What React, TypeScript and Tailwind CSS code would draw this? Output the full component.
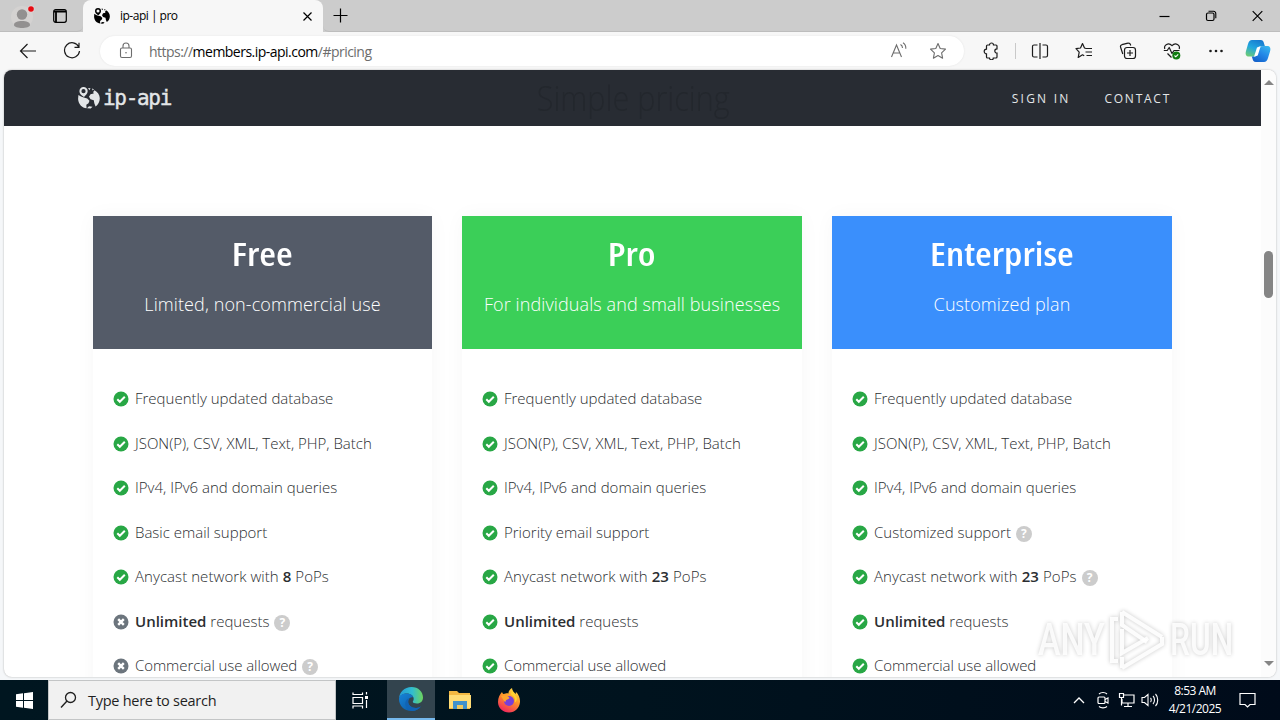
import type { ReactNode } from "react";

interface IconProps {
  children: ReactNode;
  className?: string;
  width?: number;
  height?: number;
}

function Icon({ children, className = "", width = 18, height = 18 }: IconProps) {
  return (
    <svg
      width={width}
      height={height}
      viewBox={`0 0 ${width} ${height}`}
      fill="none"
      stroke="currentColor"
      strokeWidth="1.1"
      className={`shrink-0 ${className}`}
    >
      {children}
    </svg>
  );
}

function Globe({ size, className = "" }: { size: number; className?: string }) {
  return (
    <svg width={size} height={size} viewBox="0 0 22 22" fill="currentColor" className={`shrink-0 ${className}`}>
      <path
        fillRule="evenodd"
        d="M5.500 0a4.200 4.200 0 0 1 4.200 4.300C9.700 6.600 7.300 8.500 6 10 3.500 8.500 1.400 6.600 1.400 4.300A4.200 4.200 0 0 1 5.500 0Zm0 2.100a2.100 2.100 0 1 0 0 4.200 2.100 2.100 0 0 0 0-4.200Z"
      />
      <path d="M.4 8 3 9.500l2.800 1 3.400 1 2.300 2.300-1 2.500-2.200 1.500.3 3.400C4 21 .3 17 .1 12Z" />
      <path d="M16.500 3.200c3 1.500 5.200 4.600 5.300 8 0 3.500-1.700 6.500-4.200 8.200l-1.300-3.200-.5-2.900-3.300-1-1.500-2.500 1.500-2.500 3.200-.8-.500-1.500Z" />
      <path d="m10 1 2.500.2-1 2Zm4 .4 2 .8-1.400 1.200Z" />
      <path d="m9 21.300 2-2 3.500.4-1.800 1.900Z" />
    </svg>
  );
}

function TitleBar() {
  return (
    <div className="flex h-8 shrink-0 bg-[#cccccc] text-black">
      <div className="flex w-[83px] items-center rounded-br-md border-b border-[#bdbdbd] pl-[11px]">
        <svg width="24" height="28" viewBox="0 0 24 28" className="shrink-0">
          <circle cx="11" cy="15" r="11" fill="#d4d2d1" />
          <circle cx="11" cy="12.500" r="5.200" fill="#929090" />
          <path d="M3 23c0-3 3.500-4 8-4s8 1 8 4c0 2-4 3-8 3s-8-1-8-3Z" fill="#929090" />
          <circle cx="20" cy="7" r="3.500" fill="#e5d2d2" />
          <circle cx="20" cy="7" r="2.800" fill="#e60b12" />
        </svg>
        <Icon width={16} height={16} className="ml-[17px]">
          <rect x="1.700" y="1.700" width="12.600" height="12.600" rx="2" strokeWidth="1.200" />
          <path d="M2 3.500h12M4 4v10" strokeWidth="1.800" />
        </Icon>
      </div>
      <div className="flex w-[240px] items-center rounded-t-lg bg-[#f7f7f7] pl-[11px] pr-[10px]">
        <Globe size={16} />
        <span className="ml-[10px] grow text-[12px] tracking-[-0.5px]">ip-api | pro</span>
        <Icon width={11} height={11}>
          <path d="m1.500 1.500 8 8m0-8-8 8" strokeWidth="1.200" />
        </Icon>
      </div>
      <div className="flex grow items-center rounded-bl-md border-b border-[#bdbdbd] pl-[10px] pr-[17px]">
        <Icon width={15} height={15}>
          <path d="M7.500.5v14M.5 7.500h14" strokeWidth="1.200" />
        </Icon>
        <div className="ml-auto flex items-center gap-[35px]">
          <Icon width={11} height={12}>
            <path d="M.5 6.500h10" strokeWidth="1.200" />
          </Icon>
          <Icon width={12} height={12}>
            <rect x="1.500" y="3" width="7.500" height="7.500" rx="1.500" strokeWidth="1.200" />
            <path d="M3.500 1.200h5a2.500 2.500 0 0 1 2.300 2.500v4.500" strokeWidth="1.100" />
          </Icon>
          <Icon width={11} height={12}>
            <path d="m.7 1.200 9.600 9.600m0-9.600-9.600 9.600" strokeWidth="1.200" />
          </Icon>
        </div>
      </div>
    </div>
  );
}

function Toolbar() {
  return (
    <div className="flex h-[38px] shrink-0 items-center bg-[#f7f7f7] pl-[19px] pr-[9px] text-[#1b1b1b]">
      <Icon>
        <path d="M17 9H1.500M8.500 2 1.500 9l7 7" strokeWidth="1.200" />
      </Icon>
      <Icon className="ml-[26px]">
        <path d="M15.800 5A7.500 7.500 0 1 0 16.500 9M16 .8v4.500h-4.500" strokeWidth="1.200" />
      </Icon>
      <div className="ml-[19px] flex h-[30px] w-[864px] items-center rounded-full bg-white pl-[19px] pr-[17px] text-[#6d6d6d] shadow-[0_0_2px_#e2e2e2]">
        <Icon width={14} height={18}>
          <rect x="1.500" y="6" width="11" height="9.500" rx="1.500" />
          <path d="M4 6V4a3 3 0 0 1 6 0v2" />
          <circle cx="7" cy="10.800" r=".8" fill="currentColor" stroke="none" />
        </Icon>
        <span className="ml-[16px] grow text-[14px] tracking-[-0.52px]">
          https://<span className="text-black">members.ip-api.com</span>/#pricing
        </span>
        <Icon width={17} height={18}>
          <path d="M1.500 15 6.500 3l5 12M3.200 11h6.700M10.500 2.500c1.500.8 2 2 2 3.500M13 .8c2.200 1.300 3 3.500 2.800 6" />
        </Icon>
        <Icon className="ml-[22px]">
          <path d="m9 1.500 2.200 5 5.300.6-3.900 3.700 1 5.400L9 13.500l-4.600 2.700 1-5.400-3.900-3.700 5.300-.6Z" strokeLinejoin="round" />
        </Icon>
      </div>
      <Icon className="ml-[18px]">
        <path
          d="M5.500 3h2a2 2 0 0 1 4 0H14a1 1 0 0 1 1 1v2.800a1.800 1.800 0 1 0 0 4.400V15a1 1 0 0 1-1 1h-2.700a1.900 1.900 0 0 1-3.800 0H5.500a1 1 0 0 1-1-1v-3.200a2.300 2.300 0 0 1 0-4.600V4a1 1 0 0 1 1-1Z"
          strokeWidth="1.200"
        />
      </Icon>
      <div className="ml-[15px] h-4 w-px bg-[#c9c9c9]" />
      <Icon className="ml-[15px]">
        <path d="M6.500 3H3a1.500 1.500 0 0 0-1.500 1.500v9A1.500 1.500 0 0 0 3 15h3.500M11.500 3H15a1.500 1.500 0 0 1 1.500 1.500v9A1.500 1.500 0 0 1 15 15h-3.500M9 1v16" strokeWidth="1.200" />
      </Icon>
      <Icon className="ml-[26px]">
        <path d="M11 6.500 9.500 6 7.500 1.500 5.500 6l-4.500.7 3.200 3.500-1 5.300 4.300-2.700 1.700 1M10.500 6.500H17M10.500 10H17M11.500 13.500H17" strokeWidth="1.200" strokeLinejoin="round" />
      </Icon>
      <Icon className="ml-[26px]">
        <rect x="5.500" y="5.500" width="11" height="11" rx="2.500" strokeWidth="1.200" />
        <path d="M11 8v6M8 11h6M3.800 12 1.600 5.200a2 2 0 0 1 1.300-2.500l6-1.500a2 2 0 0 1 2.500 1.300l.3 1" strokeWidth="1.200" />
      </Icon>
      <Icon className="ml-[26px]">
        <path d="M1.800 7C.5 3 5.500 0 9 3.700 12.500 0 17.500 3 16.200 7M4.500 11.500 8.500 15.500M.8 8.500h3.400l2-3 2.800 6 2-3h5.500" strokeWidth="1.200" strokeLinejoin="round" />
        <circle cx="13.300" cy="13.500" r="4" fill="#107c10" stroke="none" />
        <path d="m11.500 13.500 1.300 1.300 2.400-2.500" stroke="white" />
      </Icon>
      <Icon className="ml-[26px]">
        <g fill="currentColor" stroke="none">
          <circle cx="3.500" cy="9" r="1.300" />
          <circle cx="9" cy="9" r="1.300" />
          <circle cx="14.500" cy="9" r="1.300" />
        </g>
      </Icon>
      <svg width="26" height="24" viewBox="0 0 26 24" className="ml-auto shrink-0">
        <defs>
          <linearGradient id="copilotLeft" x1=".7" y1="0" x2=".2" y2="1">
            <stop offset="0" stopColor="#1779cf" />
            <stop offset=".5" stopColor="#21a6df" />
            <stop offset="1" stopColor="#6ccb77" />
          </linearGradient>
          <linearGradient id="copilotRight" x1=".9" y1="0" x2=".2" y2="1">
            <stop offset="0" stopColor="#38b8ee" />
            <stop offset=".5" stopColor="#2387e7" />
            <stop offset="1" stopColor="#135fc9" />
          </linearGradient>
        </defs>
        <path d="M7 1h8.500c2.500 0 3 1.500 3.700 4l.8 2.500h-3c-2 0-2.800 1-3.400 3L12 15c-.7 2-1.500 2.500-3.500 2.500H4c-3 0-4-2-3-5.500l2-7C3.800 2.200 5 1 7 1Z" fill="url(#copilotLeft)" />
        <path d="M19 7h3c3 0 4 2 3 5.500l-2 6.500c-.8 2.700-2 4-4 4h-8c-2.500 0-3-1.500-3.700-4l-.5-1.500h2.500c2 0 2.800-1 3.400-3L14.200 10c.7-2 2-3 4.800-3Z" fill="url(#copilotRight)" />
        <path d="m12 8.500 3.700-1.500-3 9.500-3.700 1.200Z" fill="white" />
      </svg>
    </div>
  );
}

function StatusMark({ included }: { included: boolean }) {
  return (
    <svg width="16" height="16" viewBox="0 0 16 16" fill="none" className="shrink-0">
      <circle cx="8" cy="8" r="7.500" fill={included ? "#28a745" : "#6c757d"} />
      {included ? (
        <path d="m4.300 8.300 2.500 2.500 5-5" stroke="white" strokeWidth="2" />
      ) : (
        <path d="m5.200 5.200 5.600 5.600m0-5.600-5.600 5.600" stroke="white" strokeWidth="2.400" />
      )}
    </svg>
  );
}

function HelpMark() {
  return (
    <span className="mt-[2px] ml-[5px] flex h-4 w-4 items-center justify-center rounded-full bg-[#cccccc] text-[12px] leading-none font-bold text-white">
      ?
    </span>
  );
}

interface Feature {
  label: ReactNode;
  included?: boolean;
  help?: boolean;
}

interface PlanProps {
  name: string;
  tagline: string;
  headerClass: string;
  features: Feature[];
}

function Plan({ name, tagline, headerClass, features }: PlanProps) {
  return (
    <div className="h-[620px] bg-white shadow-[0_0_20px_rgba(0,0,0,0.035)]">
      <div className={`flex h-[133px] flex-col items-center text-white ${headerClass}`}>
        <h3 className="mt-[15px] scale-x-[1.16] text-[33px] leading-[46px] font-semibold font-stretch-75%">{name}</h3>
        <p className="mt-[14px] text-[18px] leading-[26px] font-light tracking-[0.1px] whitespace-nowrap">{tagline}</p>
      </div>
      <ul className="pt-[28px] pl-5 text-[15px] font-light text-[#2b2e31]">
        {features.map((feature, i) => (
          <li key={i} className="flex h-[44.5px] items-center">
            <StatusMark included={feature.included !== false} />
            <span className="mb-[2px] ml-[6px] whitespace-nowrap">{feature.label}</span>
            {feature.help && <HelpMark />}
          </li>
        ))}
      </ul>
    </div>
  );
}

const unlimited = (
  <>
    <b className="font-semibold">Unlimited</b> requests
  </>
);

const anycast = (count: number) => (
  <span className="tracking-[0.06px]">
    Anycast network with <b className="font-semibold">{count}</b> PoPs
  </span>
);

const common: Feature[] = [
  { label: "Frequently updated database" },
  { label: "JSON(P), CSV, XML, Text, PHP, Batch" },
  { label: "IPv4, IPv6 and domain queries" },
];

const commercial = <span className="tracking-[-0.08px]">Commercial use allowed</span>;

const plans: PlanProps[] = [
  {
    name: "Free",
    tagline: "Limited, non-commercial use",
    headerClass: "bg-[#545b68]",
    features: [
      ...common,
      { label: "Basic email support" },
      { label: anycast(8) },
      { label: unlimited, included: false, help: true },
      { label: commercial, included: false, help: true },
    ],
  },
  {
    name: "Pro",
    tagline: "For individuals and small businesses",
    headerClass: "bg-[#3bcf58]",
    features: [
      ...common,
      { label: "Priority email support" },
      { label: anycast(23) },
      { label: unlimited },
      { label: commercial },
    ],
  },
  {
    name: "Enterprise",
    tagline: "Customized plan",
    headerClass: "bg-[#3a8ffc]",
    features: [
      ...common,
      { label: "Customized support", help: true },
      { label: anycast(23), help: true },
      { label: unlimited },
      { label: commercial },
    ],
  },
];

function Page() {
  return (
    <div className="mx-1 flex h-[607px] shrink-0 overflow-hidden rounded-lg bg-white shadow-[0_0_2px_#aaa]">
      <div className="w-[1257px] shrink-0">
        <nav className="grid h-14 grid-cols-[1fr_auto_1fr] items-center bg-[#282c33] pr-[90px] pl-[74px] text-[#e3e6e8]">
          <div className="flex items-center">
            <Globe size={22} />
            <span className="ml-[3px] font-['DejaVu_Sans_Mono'] text-[21px] leading-none tracking-[-1.300px] [-webkit-text-stroke:0.4px]">
              ip-api
            </span>
          </div>
          <h2 className="mr-[-17px] scale-x-90 text-[34px] leading-none font-light text-[#23272d]">Simple pricing</h2>
          <div className="flex justify-end gap-[34px] pt-[2px] text-[12px]">
            <span className="tracking-[2.200px]">SIGN IN</span>
            <span className="tracking-[1.750px]">CONTACT</span>
          </div>
        </nav>
        <div className="mt-[90px] ml-[89px] grid w-[1079px] grid-cols-[339px_340px_340px] gap-[30px]">
          {plans.map((plan) => (
            <Plan key={plan.name} {...plan} />
          ))}
        </div>
      </div>
      <div className="flex grow flex-col items-center bg-[#fcfcfc] py-[10px]">
        <svg width="10" height="5" viewBox="0 0 10 5">
          <path d="M5 0 10 5H0Z" fill="#858585" />
        </svg>
        <div className="mt-[166px] h-[47px] w-[9px] rounded-full bg-[#858585]" />
        <svg width="10" height="5" viewBox="0 0 10 5" className="mt-auto mb-px">
          <path d="M5 5 10 0H0Z" fill="#858585" />
        </svg>
      </div>
    </div>
  );
}

function Watermark() {
  return (
    <div className="absolute top-[608px] left-[1038px] flex h-[64px] w-[196px] items-center justify-between font-['Roboto'] text-[44px] leading-none text-white/85 drop-shadow-[0_0_2px_rgba(0,0,0,0.24)]">
      <span className="w-[66px] origin-left scale-x-[0.77] font-medium">ANY</span>
      <svg width="60" height="62" viewBox="0 0 60 62" fill="none" stroke="white" strokeWidth="4" strokeOpacity=".9">
        <path d="M15 3v13l25 17M15 3l40 25" />
        <path d="M15 20v24l26-15" />
        <path d="M11 10H5v42h6M15 59l40-24v-7M15 59V48" />
      </svg>
      <span className="w-[64px] origin-left scale-x-[0.72] font-medium">RUN</span>
    </div>
  );
}

function EdgeLogo() {
  return (
    <svg width="26" height="26" viewBox="0 0 26 26">
      <defs>
        <linearGradient id="edgeTop" x1="0" y1=".5" x2="1" y2=".5">
          <stop offset="0" stopColor="#249bd5" />
          <stop offset=".55" stopColor="#31bdd0" />
          <stop offset="1" stopColor="#6ed45c" />
        </linearGradient>
        <linearGradient id="edgeBottom" x1="0" y1="0" x2="1" y2="1">
          <stop offset="0" stopColor="#1683d8" />
          <stop offset="1" stopColor="#0c559c" />
        </linearGradient>
      </defs>
      <path d="M1 13C1 6 6.500 1 13.500 1S25 6 25 11.500c0 3.700-2.500 6-6 6-2.500 0-4.200-.7-4.200-1.700 0-.7.900-1 .9-3 0-3-3.200-5.300-7-5.300C4.500 7.500 1 10 1 13Z" fill="url(#edgeTop)" />
      <path d="M1 13c0-3.500 3.500-5.500 7.500-5.500 3.500 0 6.200 1.500 7 4.200-1-1-4.800-.5-5.300 3.300-.5 4 3.700 7.300 8 7 2-.1 3.500-.8 5-1.700C21 23.500 17.500 25 13.500 25 6 25 1 19.500 1 13Z" fill="url(#edgeBottom)" />
      <path d="M10.200 15c-.5 4 3.700 7.300 8 7 2-.1 3.500-.8 4.800-1.700-2 3-5.500 4.700-9 4.700-5-1-7.500-5-6.500-9 .5-2 1.800-3.300 3.800-4-.7.800-1 1.800-1.100 3Z" fill="#1163b4" />
    </svg>
  );
}

function FirefoxLogo() {
  return (
    <svg width="24" height="25" viewBox="0 0 24 25">
      <defs>
        <linearGradient id="foxBody" x1=".8" y1="0" x2=".3" y2="1">
          <stop offset="0" stopColor="#ffe04a" />
          <stop offset=".45" stopColor="#ff9628" />
          <stop offset="1" stopColor="#f0245e" />
        </linearGradient>
      </defs>
      <path d="M5 4c.3 1 .8 1.500 1.300 2C9 5.500 10 5 11.500 5.500 11.500 3 13 1.200 15 0c.2 3 2 4 3.800 6 .2-1 .1-1.600 0-2.300 3 2.700 4.400 6.500 4.200 10.300C22.500 20 18 24.500 12 24.500S1 20 1 14c0-4.500 1.800-7.500 4-10Z" fill="url(#foxBody)" />
      <circle cx="12" cy="13" r="5" fill="#783fd8" />
      <path d="M4 8c2.500-1.500 6-.8 7.800 1 1 .9.500 1.800-.8 2.200-2 .5-2.300 1.300-2.700 3C7 13.500 6 11 4 8Z" fill="#ffa52c" />
      <path d="M14 6.500c3.500 1.700 5 5 3.700 8 2-1 2.500-3.300 2-5L15 2Z" fill="#ffd42e" />
    </svg>
  );
}

function Taskbar() {
  return (
    <div className="mt-[3px] flex h-10 shrink-0 items-center bg-linear-to-r from-[#001620] via-[#00131e] to-[#000b1a] text-white">
      <div className="flex w-12 justify-center">
        <svg width="17" height="17" viewBox="0 0 17 17" fill="white">
          <path d="M0 2.300 7 1.300V8H0ZM8 1.200 17 0v8H8ZM0 9h7v6.700l-7-1ZM8 9h9v8l-9-1.200Z" />
        </svg>
      </div>
      <div className="flex h-10 w-[288px] items-center border border-[#c3c5c6] bg-[#f1f1f1] pl-[10px] text-[#1f1f1f]">
        <Icon width={18} height={18}>
          <circle cx="11.500" cy="6.500" r="5" strokeWidth="1.300" />
          <path d="M8 10 2 16.500" strokeWidth="1.400" />
        </Icon>
        <span className="mt-px ml-[11px] text-[14.500px] tracking-[-0.270px]">Type here to search</span>
      </div>
      <div className="flex w-[51px] justify-center pr-[3px]">
        <Icon width={18} height={18}>
          <path d="M2 4V1.500M2 3.500h9M11.500 4V1.500M2 6.500h9.500v6H2ZM2 17.500V15h9.500v2.500M15.500 1v2.500M15.500 9v8" strokeWidth="1.200" />
          <path d="M14 5h3v3h-3Z" fill="white" stroke="none" />
        </Icon>
      </div>
      <div className="flex h-10 w-12 items-center justify-center border-b-2 border-[#76b9ed] bg-[#33444e]">
        <EdgeLogo />
      </div>
      <div className="flex w-[49px] justify-center">
        <svg width="22" height="20" viewBox="0 0 22 20">
          <path d="M0 1h8l2 2h11v16H0Z" fill="#f3b842" />
          <path d="M0 5h22v13H0Z" fill="#ffdc75" />
          <path d="M4 11h14v8h-4v-4H8v4H4Z" fill="#3f91cc" />
          <path d="M8 15h6v4H8Z" fill="#edc85f" />
        </svg>
      </div>
      <div className="flex w-[49px] justify-center">
        <FirefoxLogo />
      </div>
      <div className="ml-auto flex items-center pr-6">
        <Icon width={12} height={8}>
          <path d="m1 7 5-5 5 5" strokeWidth="1.300" />
        </Icon>
        <Icon width={14} height={18} className="ml-[11px]">
          <rect x="2" y="6" width="7" height="6.500" rx="1" strokeWidth="1.200" />
          <path d="m9 8.500 3-1.500v5l-3-1.500M3 3c2-2 6-2 8 0M3 15.500c2 1.800 6 1.800 8 0" />
        </Icon>
        <Icon width={17} height={16} className="ml-[8px]">
          <path d="M6 3h10v8H4V7M10 11v3M6 14.500h8M1.500 1.500h4v4h-4ZM3.500 5.500v8" strokeWidth="1.200" />
        </Icon>
        <Icon width={18} height={16} className="ml-[6px]">
          <path d="M1 5.500h2.500L7 2.500v11l-3.500-3H1ZM9.500 6c1 1 1 3 0 4M12 4c2 2 2 6 0 8M14.500 2c3 3.200 3 8.800 0 12" />
        </Icon>
        <div className="mr-px ml-[9px] w-[54px] text-center text-[12px] leading-[18px] tracking-[-0.500px] whitespace-nowrap">
          <div>8:53 AM</div>
          <div>4/21/2025</div>
        </div>
        <Icon width={17} height={17} className="ml-[16px]">
          <path d="M1 1.500h15v11h-5L8.500 15 6 12.500H1Z" strokeWidth="1.200" />
        </Icon>
      </div>
    </div>
  );
}

export default function App() {
  return (
    <div className="relative flex h-[720px] w-[1280px] flex-col overflow-hidden bg-[#f5f7f9] font-['Open_Sans',sans-serif]">
      <TitleBar />
      <Toolbar />
      <Page />
      <Taskbar />
      <Watermark />
    </div>
  );
}
